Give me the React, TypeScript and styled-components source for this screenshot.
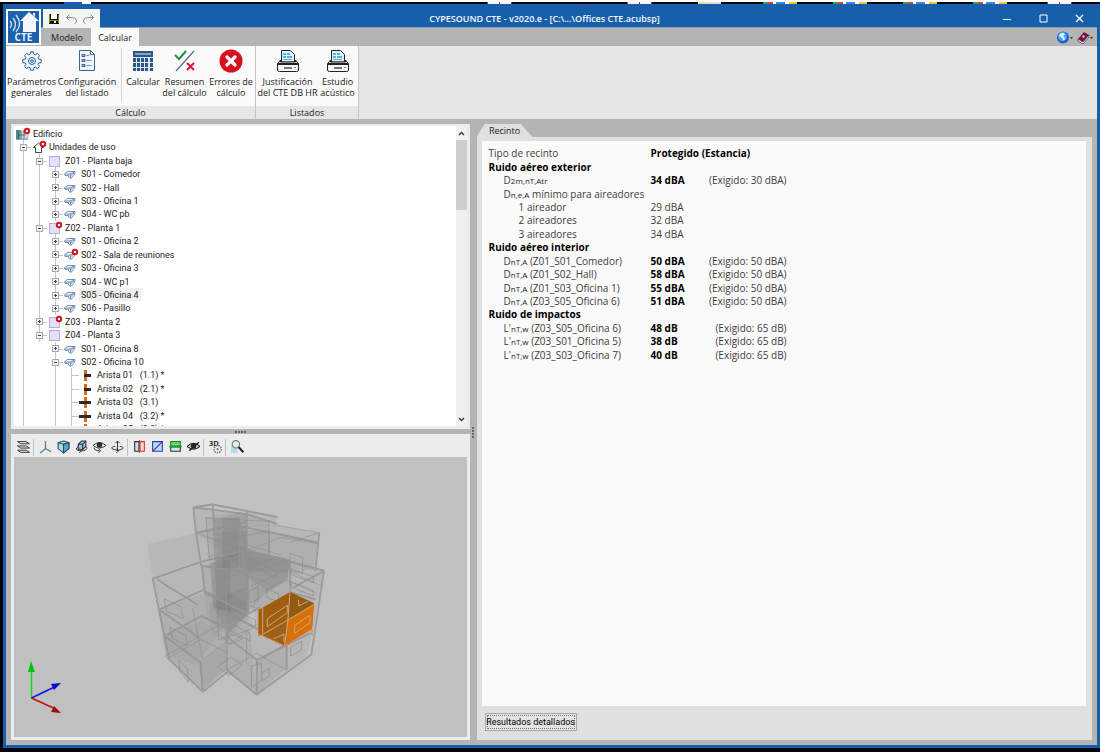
import React from "react";
import styled, { createGlobalStyle, css } from "styled-components";

const BLUE = "#185fab";
const GREY = "#b4b4b4";

const GlobalStyle = createGlobalStyle`
  *, *::before, *::after { box-sizing: border-box; }
  html, body, #root { margin: 0; height: 100%; }
  body { background: #fff; font-family: "Open Sans", "Noto Sans", sans-serif; font-size: 9px; color: #222; overflow: hidden; }
  button { font: inherit; color: inherit; border: 0; padding: 0; background: none; cursor: pointer; }
`;

/* ---------- window frame ---------- */

const Desktop = styled.div`
  height: 100vh;
  display: flex;
  flex-direction: column;
  background: #00040c;
  border-top: 2px solid #fff;
  padding: 0 0 4px 3px;
`;
const DesktopStrip = styled.svg`
  display: block;
  flex: none;
  height: 2px;
  width: 1100px;
  margin-left: -3px;
`;
const Window = styled.div`
  flex: 1;
  min-height: 0;
  display: flex;
  flex-direction: column;
  border: 3px solid ${BLUE};
  border-top: 0;
  background: ${GREY};
`;
const Header = styled.header`
  flex: none;
  display: grid;
  grid-template: 24px 18px / 37px 1fr;
  background: linear-gradient(${BLUE} 0 23px, #7a9cc0 23px 24px, ${GREY} 24px);
`;
const LogoButton = styled.button`
  grid-row: 1 / 3;
  width: 35px;
  height: 36px;
  margin-top: 5px;
  padding: 2px !important;
  background: #fff !important;
  svg { display: block; }
`;
const TitleBar = styled.div`
  display: grid;
  grid-template-columns: 57px 1fr 108px;
  align-items: end;
`;
const QuickAccess = styled.div`
  display: flex;
  align-items: center;
  justify-content: space-evenly;
  height: 19px;
  background: #f5f5f5;
  button { height: 14px; }
  svg { display: block; }
`;
const Title = styled.h1`
  margin: 0;
  font-size: 9px;
  line-height: 19px;
  font-weight: 600;
  text-align: center;
  color: #f4f8fc;
`;
const WindowControls = styled.div`
  display: flex;
  height: 19px;
  button { flex: 1; display: grid; place-items: center; }
`;
const TabRow = styled.nav`
  display: flex;
  align-items: stretch;
`;
const RibbonTab = styled.button<{ $active?: boolean }>`
  width: 48px;
  line-height: 17px;
  ${p => p.$active && css`background: #fafafa;`}
`;
const HelpButtons = styled.div`
  margin-left: auto;
  display: flex;
  align-items: center;
  gap: 4px;
  padding-right: 3px;
  svg { display: block; }
`;

/* ---------- ribbon ---------- */

const Ribbon = styled.div`
  flex: none;
  display: flex;
  height: 73px;
  background: #e6e6e6;
`;
const RibbonGroup = styled.section`
  display: flex;
  flex-direction: column;
  border-right: 1px solid #c4c4c4;
`;
const RibbonBody = styled.div`
  flex: 1;
  display: flex;
  padding: 0 1px;
  background: #fafafa;
`;
const RibbonCaption = styled.h2`
  margin: 0;
  font-size: 9px;
  font-weight: 400;
  line-height: 13px;
  text-align: center;
  background: #e6e6e6;
`;
const RibbonButton = styled.button<{ $w: number }>`
  width: ${p => p.$w}px;
  display: flex;
  flex-direction: column;
  align-items: center;
  padding-top: 3px !important;
  white-space: nowrap;
  line-height: 11px;
  svg { display: block; margin-bottom: 3px; }
`;
const RibbonSeparator = styled.span`
  width: 1px;
  margin: 2px 3px 4px;
  background: #d2d2d2;
`;

/* ---------- work area ---------- */

const WorkArea = styled.main`
  flex: 1;
  min-height: 0;
  display: grid;
  grid-template-columns: minmax(0, 459fr) 7px minmax(0, 616fr);
  padding: 5px 5px 5px 5px;
`;
const LeftColumn = styled.div`
  min-height: 0;
  display: grid;
  grid-template-rows: minmax(0, 305fr) 5px minmax(0, 306fr);
`;
const Splitter = styled.div<{ $vertical?: boolean }>`
  display: flex;
  flex-direction: ${p => (p.$vertical ? "column" : "row")};
  align-items: center;
  justify-content: center;
  gap: 1px;
  i { width: 2px; height: 2px; background: #666; }
`;
const TreePane = styled.section`
  display: flex;
  min-height: 0;
  border: 3px solid #ececec;
  border-width: 2px 3px 3px;
  background: #fff;
`;
const TreeViewport = styled.div`
  flex: 1;
  overflow: hidden;
`;
const TreeList = styled.ul`
  list-style: none;
  margin: 0;
  padding: 1px 0 0 1px;
  height: 296px;
  display: grid;
  grid-auto-rows: 1fr;
`;
const TreeTail = styled.ul`
  list-style: none;
  margin: 0;
  padding: 0 0 0 1px;
`;
const TreeRow = styled.li`
  display: flex;
  min-height: 0;
  white-space: pre;
  line-height: 14px;
  font-family: Roboto, "Open Sans", sans-serif;
`;
const Guide = styled.span<{ $v?: boolean; $h?: boolean }>`
  width: 16px;
  flex: none;
  display: flex;
  align-items: center;
  justify-content: center;
  background-repeat: no-repeat;
  background-image:
    ${p => (p.$v ? "linear-gradient(#c4c4c4, #c4c4c4)" : "none")},
    ${p => (p.$h ? "linear-gradient(#c4c4c4, #c4c4c4)" : "none")};
  background-size: 1px 100%, 8px 1px;
  background-position: 8px 0, 8px 7px;
`;
const Toggle = styled.button<{ $open: boolean }>`
  width: 7px;
  height: 7px;
  margin: 1px 0 0 1px;
  border: 1px solid #a8a8a8 !important;
  background:
    linear-gradient(#445, #445) center / 3px 1px no-repeat,
    ${p => (p.$open ? "" : "linear-gradient(#445, #445) center / 1px 3px no-repeat,")}
    #f4f4f8 !important;
`;
const NodeIcon = styled.span`
  width: 16px;
  flex: none;
  display: flex;
  svg { display: block; }
`;
const NodeLabel = styled.span<{ $selected?: boolean }>`
  padding: 0 2px;
  ${p => p.$selected && css`background: #efefef;`}
`;
const Scrollbar = styled.div`
  width: 11px;
  display: flex;
  flex-direction: column;
  background: #f0f0f0;
  button { height: 14px; display: grid; place-items: center; }
`;
const ScrollTrack = styled.div`
  flex: 1;
  &::before { content: ""; display: block; height: 70px; background: #cdcdcd; }
`;

const ViewPane = styled.section`
  display: flex;
  flex-direction: column;
  min-height: 0;
  border: 3px solid #ececec;
  border-top: 0;
  background: #ececec;
`;
const ViewToolbar = styled.div`
  flex: none;
  display: flex;
  align-items: center;
  height: 23px;
  padding-top: 3px;
  svg { display: block; }
`;
const ToolButton = styled.button`
  width: 18px;
  height: 16px;
  display: grid;
  place-items: center;
`;
const ToolSeparator = styled.span`
  width: 1px;
  height: 17px;
  margin: 0 2px 0 1px;
  background: #c0c0c0;
`;
const Canvas = styled.div`
  flex: 1;
  min-height: 0;
  overflow: hidden;
  background: #c0c0c0;
  svg { display: block; }
`;

/* ---------- results ---------- */

const ResultsColumn = styled.section`
  display: flex;
  flex-direction: column;
  min-height: 0;
`;
const ResultsTab = styled.button`
  align-self: flex-start;
  width: 56px;
  height: 13px;
  line-height: 12px;
  text-align: center;
  background: #e0e0e0 !important;
  clip-path: polygon(8px 0, 44px 0, 100% 100%, 0 100%);
`;
const ResultsBody = styled.div`
  flex: 1;
  display: flex;
  flex-direction: column;
  padding: 4px 6px 9px 5px;
  background: #e0e0e0;
`;
const Report = styled.div`
  flex: 1;
  padding: 6px 7px;
  background: #fafafa;
`;
const ReportTable = styled.table`
  table-layout: fixed;
  width: 298px;
  height: 215px;
  border-collapse: collapse;
  font-size: 10px;
  line-height: 13px;
  color: #3c3c3c;
  white-space: nowrap;
  th, td { padding: 0; text-align: left; font-weight: 400; }
`;
const LabelCell = styled.th<{ $indent: number }>`
  && { padding-left: ${p => p.$indent * 15}px; }
`;
const HeadingCell = styled.th`
  &&& { font-weight: 700; color: #000; }
`;
const ValueCell = styled.td<{ $strong?: boolean }>`
  && { ${p => p.$strong && css`font-weight: 700; color: #000;`} }
`;
const LimitCell = styled.td`
  && { text-align: right; }
`;
const Small = styled.span`
  font-size: 8px;
  color: #222;
`;
const DetailsButton = styled.button`
  align-self: flex-start;
  width: 92px;
  height: 18px;
  margin: 7px 0 0 3px;
  padding: 1px !important;
  border: 1px solid #a8a8a8 !important;
  background: #e4e4e4 !important;
  color: #000;
  white-space: nowrap;
  span {
    display: flex;
    justify-content: center;
    height: 14px;
    border: 1px dotted #777;
    line-height: 12px;
    font-family: Roboto, "Open Sans", sans-serif;
  }
`;

/* ---------- icons ---------- */

const LogoIcon = () => (
  <svg width="31" height="32" viewBox="0 0 31 32">
    <rect width="31" height="32" fill="#1d62ad" />
    <path d="M12 10 21 1l10 9h-3v11H15V10z" fill="#f4f8fc" />
    <path d="M25 2h2v4l-2-2z" fill="#f4f8fc" />
    <g fill="none" stroke="#cfe4f8" strokeWidth="1.300">
      <path d="M2 10q3 3 0 7M5 7q5 6 0 13M8 4q7 9 0 17" />
    </g>
    <text x="15.500" y="30" textAnchor="middle" fontSize="10" fontWeight="700" fill="#e8f1fa">CTE</text>
  </svg>
);
const SaveIcon = () => (
  <svg width="12" height="12" viewBox="0 0 12 12">
    <path d="M1 1h10v10H1z" fill="#111" />
    <rect x="3" y="1" width="6" height="5" fill="#fff" />
    <path d="M1 1h1v9H1zM10 2h1v8h-1zM2 7h8v1H2z" fill="#8a8a00" />
    <rect x="6" y="8" width="2" height="2" fill="#eee" />
  </svg>
);
const UndoIcon = ({ redo }: { redo?: boolean }) => (
  <svg width="13" height="12" viewBox="0 0 13 12" fill="none" stroke="#8a8a8a" strokeWidth="1">
    <g transform={redo ? "translate(13 0) scale(-1 1)" : undefined}>
      <path d="M4.500 1.500 1.500 4.500l3 3M1.500 4.500h6q4 0 4 3.500 0 2-2 2.500" />
    </g>
  </svg>
);
const GlobeIcon = () => (
  <svg width="16" height="13" viewBox="0 0 16 13">
    <circle cx="6" cy="6.500" r="6" fill="#1c5cd0" />
    <circle cx="5.500" cy="5.500" r="4.500" fill="#4aa4f4" />
    <path d="M3 3q3-2 5 0l-2 2 2 2-1 3-2-3-3-2z" fill="#e4f6ff" />
    <path d="M13 6h3l-1.500 2z" fill="#333" />
  </svg>
);
const BookIcon = () => (
  <svg width="17" height="13" viewBox="0 0 17 13">
    <path d="M1 8 7 1l5 3-6 7z" fill="#6c1258" />
    <path d="m1 8 5 3 6-7v2l-6 7-5-3z" fill="#f4ecf2" stroke="#400830" strokeWidth=".6" />
    <path d="m6 4 2 1-1 2-2-1z" fill="#f2d020" />
    <path d="M13 6h3l-1.500 2z" fill="#333" />
  </svg>
);
const GearIcon = () => {
  const pts: string[] = [];
  for (let i = 0; i < 8; i++) {
    [[-0.280, 7], [-0.170, 9.300], [0.170, 9.300], [0.280, 7]].forEach(([d, r]) => {
      const a = (i * Math.PI) / 4 + d;
      pts.push(`${(12 + r * Math.sin(a)).toFixed(2)},${(12 - r * Math.cos(a)).toFixed(2)}`);
    });
  }
  return (
    <svg width="24" height="24" viewBox="0 0 24 24" fill="none" stroke="#2c5a8c" strokeWidth="1">
      <polygon points={pts.join(" ")} fill="#f2f7fc" strokeLinejoin="round" />
      <circle cx="12" cy="12" r="3.500" />
      <circle cx="12" cy="12" r="1.300" />
    </svg>
  );
};
const ListingIcon = () => (
  <svg width="24" height="24" viewBox="0 0 24 24" fill="none" stroke="#3c6793" strokeWidth="1">
    <path d="M4.500 1.500h11l4 4v16h-15zM15.500 1.500v4h4" fill="#eef4fa" />
    <path d="M7 5.500h3v2H7zM7 10.500h3v2H7zM7 15.500h3v2H7z" fill="#9dbbd8" />
    <path d="M11.500 6.500h3M11.500 11.500h5M11.500 16.500h5" stroke="#6c93b8" />
  </svg>
);
const CalculatorIcon = () => (
  <svg width="24" height="24" viewBox="0 0 24 24">
    <rect x="2" y="2" width="20" height="6" fill="#2b5687" />
    <rect x="4" y="4" width="16" height="2" fill="#7fa5cc" />
    <rect x="2" y="8" width="20" height="14" fill="#dce8f3" />
    {[9, 14, 19].map(y => [2, 6, 10, 14, 19].map(x => (
      <rect key={`${x}-${y}`} x={x} y={y} width="3" height={y === 19 ? 3 : 4} fill="#2b5687" />
    )))}
  </svg>
);
const SummaryIcon = () => (
  <svg width="24" height="24" viewBox="0 0 24 24" fill="none">
    <path d="M21 2 3 22" stroke="#50708e" strokeWidth="1.200" />
    <path d="m2 6 4 4 7-8" stroke="#1c9444" strokeWidth="2" />
    <path d="m14 14 7 7m0-7-7 7" stroke="#e0182c" strokeWidth="2" />
  </svg>
);
const ErrorsIcon = () => (
  <svg width="24" height="24" viewBox="0 0 24 24">
    <circle cx="12" cy="12" r="11.500" fill="#d8101c" />
    <path d="m8 8 8 8m0-8-8 8" stroke="#fff" strokeWidth="3.200" strokeLinecap="round" />
  </svg>
);
const PrinterIcon = () => (
  <svg width="24" height="24" viewBox="0 0 24 24">
    <path d="M5.500 13V1.500h9l4 4V13z" fill="#e4f5fd" stroke="#222" />
    <path d="M7 4h3v2H7zM11 4h3v2h-3zM7 7h3v2H7zM11 7h5v2h-5zM7 10h9v1H7z" fill="#55b4e0" />
    <path d="M1.500 15l3-4v2h15v-2l3 4v6q0 1.500-2 1.500h-17q-2 0-2-1.500z" fill="#f4f4f4" stroke="#222" />
    <path d="M1.500 14h21v2h-21z" fill="#222" />
    <path d="M8 18h8v2H8z" fill="#777" />
    <rect x="18" y="18" width="2" height="1" fill="#e07020" />
  </svg>
);

const ErrorBadge = () => (
  <circle cx="12" cy="4" r="2.200" fill="#fff" stroke="#d4141c" strokeWidth="2" />
);
const NodeGlyph = ({ kind, error }: { kind: string; error?: boolean }) => (
  <svg width="16" height="14" viewBox="0 0 16 14">
    {kind === "building" && (
      <g>
        <path d="M1 3h5v9H1z" fill="#4a8f86" />
        <path d="M5 4h8v8H5z" fill="#c8dce0" stroke="#7d9aa0" strokeWidth=".6" />
        <path d="M3.500 4v8M6 4v8M9 3v9M3 8h7" stroke="#556" strokeWidth=".8" />
        <path d="M1 12.500h12" stroke="#7ab0d8" />
      </g>
    )}
    {kind === "house" && (
      <path d="M4.500 12.500v-5h-2l5-4.500 5 4.500h-2v5z" fill="#fff" stroke="#444" />
    )}
    {kind === "zone" && <rect x="2.500" y="2.500" width="10" height="10" fill="#e2e0fc" stroke="#b4b0d4" />}
    {kind === "room" && (
      <path d="M1.500 7 4 4.500h8l-.5 3-3.500 4-2.500-1.500V8.500H2zM2 7h5l4.500-2M7 7l1 4M7 9l4-3" fill="#eef4fa" stroke="#6484a8" strokeWidth=".9" />
    )}
    {(kind === "edgeT" || kind === "edgeX") && (
      <g>
        <rect x="5" y="2" width="3" height="11" fill="#dd6a10" />
        <rect x={kind === "edgeT" ? 5 : 0} y="6" width={kind === "edgeT" ? 7 : 12} height="3" fill="#2a2a2a" />
      </g>
    )}
    {error && <ErrorBadge />}
  </svg>
);

/* ---------- tree data: one guide character for each indent level ---------- */

type Node = { g: string; icon: string; label: string; error?: boolean; selected?: boolean };
const nodes: Node[] = [
  { g: "", icon: "building", label: "Edificio", error: true },
  { g: "-", icon: "house", label: "Unidades de uso", error: true },
  { g: "|-", icon: "zone", label: "Z01 - Planta baja" },
  { g: "||+", icon: "room", label: "S01 - Comedor" },
  { g: "||+", icon: "room", label: "S02 - Hall" },
  { g: "||+", icon: "room", label: "S03 - Oficina 1" },
  { g: "||+", icon: "room", label: "S04 - WC pb" },
  { g: "|-", icon: "zone", label: "Z02 - Planta 1", error: true },
  { g: "||+", icon: "room", label: "S01 - Oficina 2" },
  { g: "||+", icon: "room", label: "S02 - Sala de reuniones", error: true },
  { g: "||+", icon: "room", label: "S03 - Oficina 3" },
  { g: "||+", icon: "room", label: "S04 - WC p1" },
  { g: "||+", icon: "room", label: "S05 - Oficina 4", selected: true },
  { g: "||+", icon: "room", label: "S06 - Pasillo" },
  { g: "|+", icon: "zone", label: "Z03 - Planta 2", error: true },
  { g: "|-", icon: "zone", label: "Z04 - Planta 3" },
  { g: "| +", icon: "room", label: "S01 - Oficina 8" },
  { g: "| -", icon: "room", label: "S02 - Oficina 10" },
  { g: "| |t", icon: "edgeT", label: "Arista 01   (1.1) *" },
  { g: "| |t", icon: "edgeT", label: "Arista 02   (2.1) *" },
  { g: "| |t", icon: "edgeX", label: "Arista 03   (3.1)" },
  { g: "| |t", icon: "edgeX", label: "Arista 04   (3.2) *" },
  { g: "| |t", icon: "edgeX", label: "Arista 05   (3.3) *" },
];

/* ---------- report data ---------- */

type Line = { head?: string; sym?: string; sub?: string; text?: string; indent?: number; value?: string; strong?: boolean; limit?: string };
const lines: Line[] = [
  { text: "Tipo de recinto", value: "Protegido (Estancia)", strong: true },
  { head: "Ruido aéreo exterior" },
  { sym: "D", sub: "2m,nT,Atr", indent: 1, value: "34 dBA", strong: true, limit: "(Exigido: 30 dBA)" },
  { sym: "D", sub: "n,e,A", text: " mínimo para aireadores", indent: 1 },
  { text: "1 aireador", indent: 2, value: "29 dBA" },
  { text: "2 aireadores", indent: 2, value: "32 dBA" },
  { text: "3 aireadores", indent: 2, value: "34 dBA" },
  { head: "Ruido aéreo interior" },
  { sym: "D", sub: "nT,A", text: " (Z01_S01_Comedor)", indent: 1, value: "50 dBA", strong: true, limit: "(Exigido: 50 dBA)" },
  { sym: "D", sub: "nT,A", text: " (Z01_S02_Hall)", indent: 1, value: "58 dBA", strong: true, limit: "(Exigido: 50 dBA)" },
  { sym: "D", sub: "nT,A", text: " (Z01_S03_Oficina 1)", indent: 1, value: "55 dBA", strong: true, limit: "(Exigido: 50 dBA)" },
  { sym: "D", sub: "nT,A", text: " (Z03_S05_Oficina 6)", indent: 1, value: "51 dBA", strong: true, limit: "(Exigido: 50 dBA)" },
  { head: "Ruido de impactos" },
  { sym: "L'", sub: "nT,w", text: " (Z03_S05_Oficina 6)", indent: 1, value: "48 dB", strong: true, limit: "(Exigido: 65 dB)" },
  { sym: "L'", sub: "nT,w", text: " (Z03_S01_Oficina 5)", indent: 1, value: "38 dB", strong: true, limit: "(Exigido: 65 dB)" },
  { sym: "L'", sub: "nT,w", text: " (Z03_S03_Oficina 7)", indent: 1, value: "40 dB", strong: true, limit: "(Exigido: 65 dB)" },
];

/* ---------- toolbar glyphs ---------- */

const INK = "#333";
const toolGroups: { name: string; art: React.ReactNode }[][] = [
  [{ name: "Capas", art: <path d="M.5 1.500h8l3 2h-8zM.5 5.500h8l3 2h-8zM.5 9.500h8l3 2h-8z" fill="#d8eef4" stroke={INK} strokeWidth=".9" /> }],
  [
    { name: "Ejes", art: <path d="M6 1v7l-5 4m5-4 5 3" fill="none" stroke="#4a7898" strokeWidth="1.100" /> },
    { name: "Perspectiva", art: <g stroke="#2a4c5c"><path d="M1 2.500 6 1l5 1.500V8l-5 4-5-4z" fill="#a8dcf0" /><path d="M6 4v8l5-4V2.500z" fill="#5aa8c8" /><path d="M1 2.500 6 4l5-1.500" fill="none" /></g> },
    { name: "Orbitar", art: <g stroke={INK}><path d="M3 4l3-3h4v5L7 9H3z" fill="#90c8e0" /><path d="M3 4h4v5M7 4l3-3" fill="none" /><path d="M3 6Q-1 9 4 10h4q5-2 2-4M4 12l2-2-2-2" fill="none" strokeWidth=".9" /></g> },
    { name: "Girar", art: <g><path d="M0 5q6-5 12 0-6 5-12 0z" fill="#fff" stroke={INK} strokeWidth=".9" /><circle cx="6" cy="4.500" r="2.700" fill={INK} /><path d="M1 7q0 3 5 3M5 8l2 2-2 2" fill="none" stroke={INK} strokeWidth=".9" /></g> },
    { name: "Desplazar", art: <g fill="none" stroke={INK} strokeWidth=".9"><path d="M6 1v9M4 3l2-2 2 2" /><path d="M4 6Q0 6 1 8q5 3 10 0 1-2-3-2M5 8l2 2-2 2" /></g> },
  ],
  [
    { name: "Sección vertical", art: <g><path d="M1.500 1.500h4v9h-4z" fill="#b8e4f0" stroke={INK} /><path d="M6.500 1.500h4v9h-4z" fill="#f8d8d8" stroke="#d83030" /><path d="M6 0v12" stroke="#d83030" /></g> },
    { name: "Plano de corte", art: <g><path d="M1.500 1.500h9v9h-9z" fill="#b8dcf4" stroke="#3434a8" /><path d="M1.500 10.500l9-9" stroke="#3434a8" /></g> },
    { name: "Sección horizontal", art: <g><path d="M1.500 1.500h9v4h-9z" fill="#60e070" stroke="#208830" /><path d="M1.500 6.500h9v4h-9z" fill="#c8e8f0" stroke={INK} /><path d="M0 6h12" stroke="#18a030" strokeWidth="1.200" /></g> },
    { name: "Ocultar", art: <g><path d="M0 6q6-6 12 0-6 5-12 0z" fill="#ccc" stroke="#222" /><circle cx="6" cy="5.500" r="2.500" fill="#222" /><path d="M2 10 11 2" stroke="#222" strokeWidth="1.300" /></g> },
  ],
  [{ name: "Ajustes 3D", art: <g><text x="0" y="6" fontSize="7" fontWeight="700" fill="#333">3D</text><circle cx="8" cy="8.500" r="3.400" fill="#eee" stroke="#777" strokeWidth="1.300" strokeDasharray="1.500 .8" /><circle cx="8" cy="8.500" r="1" fill="#777" /></g> }],
  [{ name: "Ampliar", art: <g><path d="M0 5h6v7H0z" fill="#b4d8ec" /><circle cx="4.500" cy="4" r="3.400" fill="#e4eef4" stroke="#777" /><path d="m7 6.500 4.500 5" stroke="#222" strokeWidth="2" /></g> }],
];

/* ---------- 3D model ---------- */

const EDGES =
  "M190 52 248 43 442 81M190 52 350 72 440 102M190 52l8 76M248 43l4 54M198 128l150-32M350 64v180" +
  "M198 128l16 100 138 18M198 128 328 108 566 158M568 128 556 244M352 246l10-4" +
  "M68 266 212 216 350 180M68 266l48 236M82 268l30 20 90 56M84 360l136-60 132 72" +
  "M104 438l110-60 80 40M112 502 218 606M218 606l76-62M104 438l108 80 6 88M84 356l124 88" +
  "M290 300v240l90 74 164-120M354 372l36-20M354 246v128M290 368l180 98M290 440l90 70 160-80" +
  "M380 510v104M470 460v80M350 182l232 60M478 212l4 96M582 242 544 494M582 242l-90 50" +
  "M216 230l8 80M224 310l130 62M556 328l-76-22";
const FINE_EDGES =
  "M226 84l190 10 4 108M228 84l10 128M416 90l24 12M262 150l150-24M270 160l90 20M346 182l110-40 110 20" +
  "M440 106l128 22-90 30M250 90l6 180M326 80l8 160M418 120l-4 90M198 128l160 60M236 200l120-34 100 30" +
  "M250 220l100 30 130-40M250 280l80-30 90 30M262 330l90-34M262 360l4 90 90-30M300 320l90 40" +
  "M294 464l186-130M104 500l190-112M214 512l80-60M380 520l88-60M350 430v90M188 356l30 150" +
  "M116 504l96-56 80 40M290 540l90-50 90 50M410 300l60-30 90 40M360 290l110-50 110 50";
const OPENINGS =
  "M102 326l50 24 8 36-50-22zM120 412l46 24 6 32-46-24zM146 510l26 26 4 40-26-30zM252 264l20-4v38l-20 4z" +
  "M360 300l24-10v38l-24 10zM410 296l36 16v24l-36-14zM360 210l80 32v20l-80-34zM302 356l74 34v20l-74-34z" +
  "M300 400l60 30v22l-60-30zM480 190l38 12v50l-38-12zM262 530l40-28 34 22-38 32zM278 444l24-12 36 14-36 16z" +
  "M482 472l32-18v26l-32 18zM396 548l22-14v24l-22 14zM364 528l30-8v52l-30 20zM484 236l66 24v18l-66-24z" +
  "M484 276l66 26v16l-66-26z";

const BuildingModel = () => (
  <svg width="453" height="280" viewBox="0 0 453 280" role="img" aria-label="Modelo 3D del edificio">
    <g transform="translate(116 33) scale(.33333)" strokeLinejoin="round">
      <g fill="#707070" fillOpacity=".1">
        <path d="M52 162 204 128l4 92-140 48z" />
        <path d="M190 52 248 43l192 36v28l-90 4-4-48-96-16z" />
        <path d="M192 54 350 70l4 175-138-15z" />
        <path d="M226 80l100-14 92 24 2 108-64 4-6 170-100-20z" />
        <path d="M250 90l76-10 24 60 6 220-94 20z" />
        <path d="M330 106 440 105l128 25-20 112-110-38-86 42z" />
        <path d="M198 128 416 120l150 36-8 74-60 20-150-8z" />
        <path d="M68 266 212 222l140 22v138l-62 20-92 124-86-30z" />
        <path d="M84 360 220 310l132 62 32 60 80 36 82-40-16 70-148 112-92-70-76 62-108-100z" />
        <path d="M350 175l232 66-36 190-84 38-80-36z" />
        <path d="M216 230l130-50 8 190-64 66-60-50z" />
        <path d="M290 300l60 40 30 274-90-74z" />
        <path d="M96 440l120-50 70 50v100l-70 62-104-104z" />
        <path d="M206 520l84-60v78l-72 65z" />
        <path d="M380 520l90-60v70l-90 84z" />
        <path d="M350 180l130 28v100l-100 60-30-20z" />
        <path d="M240 340l110-50v90l-60 80-50-40z" />
      </g>
      <g fill="#4c4c4c" fillOpacity=".11">
        <path d="M248 90l80-24 22 10v110l-92 30z" />
        <path d="M350 180l130 28-8 56-60 40-62-44z" />
        <path d="M256 200l94-10 6 180-60 60-38-60z" />
        <path d="M276 84h50v150h-50z" />
        <path d="M354 200l120 10v60l-70 42-48 58z" />
        <path d="M240 220l60-14v160l-50-10z" />
      </g>
      <g fill="none">
        <path d={FINE_EDGES} stroke="#8a8a8a" strokeOpacity=".55" strokeWidth="3" />
        <path d={EDGES} stroke="#868686" strokeOpacity=".75" strokeWidth="5" />
        <path d={EDGES} stroke="#a6a6a6" strokeOpacity=".8" strokeWidth="2" />
        <path d={OPENINGS} stroke="#8c8c8c" strokeOpacity=".7" strokeWidth="3" />
      </g>
      <path d="M386 360 480 306l72 34-6 76-82 50-80-36z" fill="#bd6810" />
      <path d="M480 306l72 34-78 48z" fill="#945913" />
      <path d="M474 388l78-44-6 72-82 50z" fill="#d8700a" />
      <path d="M386 360l92-52-8 90-84 40z" fill="#a05e10" />
      <path d="M386 432l86-40-8 74z" fill="#a06018" />
      <g fill="none" stroke="#c9a880" strokeWidth="3">
        <path d="M398 352v78M480 306l-6 84-10 76M474 390l78-46M386 440l88-50M412 386l60-40v22l-60 42zM494 406l46-30v22l-46 32zM506 330v18l28-14M432 446l30-14v24" />
      </g>
      <path d="M386 362v68l78 38 82-52v20" fill="none" stroke="#ef6a18" strokeWidth="3" strokeDasharray="7 4" />
    </g>
    <g strokeWidth="1.500">
      <path d="M17.500 241V213" stroke="#10d818" />
      <path d="M17 204l4 11h-7z" fill="#08c010" />
      <path d="m17.500 241 23-11" stroke="#1010e8" />
      <path d="m47 226-7 7-3-6z" fill="#0808d0" />
      <path d="m17.500 241 22 10" stroke="#c01010" />
      <path d="m47 256-10-1 3-6z" fill="#a80808" />
    </g>
  </svg>
);

const Chevron = ({ down }: { down?: boolean }) => (
  <svg width="7" height="5" viewBox="0 0 7 5" fill="none" stroke="#333" strokeWidth="1.300">
    <path d={down ? "m1 1 2.500 2.500L6 1" : "m1 4 2.500-2.500L6 4"} />
  </svg>
);

export default function App() {
  return (
    <>
      <GlobalStyle />
      <Desktop>
        <DesktopStrip viewBox="0 0 1100 2" aria-hidden>
          <path d="M64 0h18v2H64z" fill="#2058b8" />
          <path d="M82 0h9v2h-9z" fill="#fff" />
          {[487, 627, 1047].map(x => (
            <g key={x}>
              <rect x={x} width="25" height="2" fill="#f4f4f4" />
              <path d={`M${x} 0h1v2h-1zM${x + 12} 0h1v2h-1zM${x + 24} 0h1v2h-1z`} fill="#d82020" />
            </g>
          ))}
          <rect x="698" width="8" height="2" fill="#f0dc80" />
          <rect x="706" width="15" height="2" fill="#e8d8d8" />
          {[763, 833, 903, 973].map(x => (
            <g key={x}>
              <rect x={x} width="5" height="2" fill="#30a050" />
              <rect x={x + 5} width="5" height="2" fill="#e04030" />
              <rect x={x + 10} width="16" height="2" fill="#fff" />
              <rect x={x + 13} width="9" height="2" fill="#4080e8" />
              <rect x={x + 26} width="8" height="2" fill="#f4c430" />
            </g>
          ))}
        </DesktopStrip>
        <Window>
          <Header>
            <LogoButton aria-label="Menú"><LogoIcon /></LogoButton>
            <TitleBar>
              <QuickAccess>
                <button aria-label="Guardar"><SaveIcon /></button>
                <button aria-label="Deshacer"><UndoIcon /></button>
                <button aria-label="Rehacer"><UndoIcon redo /></button>
              </QuickAccess>
              <Title>CYPESOUND CTE - v2020.e - [C:\...\Offices CTE.acubsp]</Title>
              <WindowControls>
                <button aria-label="Minimizar"><svg width="9" height="9"><path d="M0 5.500h8" stroke="#fff" /></svg></button>
                <button aria-label="Maximizar"><svg width="9" height="9"><path d="M1 1h7v7H1z" fill="none" stroke="#fff" /></svg></button>
                <button aria-label="Cerrar"><svg width="9" height="9"><path d="m1 1 7 7m0-7L1 8" stroke="#fff" strokeWidth="1.400" /></svg></button>
              </WindowControls>
            </TitleBar>
            <TabRow>
              <RibbonTab>Modelo</RibbonTab>
              <RibbonTab $active>Calcular</RibbonTab>
              <HelpButtons>
                <button aria-label="Web"><GlobeIcon /></button>
                <button aria-label="Ayuda"><BookIcon /></button>
              </HelpButtons>
            </TabRow>
          </Header>

          <Ribbon>
            <RibbonGroup>
              <RibbonBody>
                <RibbonButton $w={49}><GearIcon />Parámetros<br />generales</RibbonButton>
                <RibbonButton $w={62}><ListingIcon />Configuración<br />del listado</RibbonButton>
                <RibbonSeparator />
                <RibbonButton $w={36}><CalculatorIcon />Calcular</RibbonButton>
                <RibbonButton $w={47}><SummaryIcon />Resumen<br />del cálculo</RibbonButton>
                <RibbonButton $w={46}><ErrorsIcon />Errores de<br />cálculo</RibbonButton>
              </RibbonBody>
              <RibbonCaption>Cálculo</RibbonCaption>
            </RibbonGroup>
            <RibbonGroup>
              <RibbonBody>
                <RibbonButton $w={61}><PrinterIcon />Justificación<br />del CTE DB HR</RibbonButton>
                <RibbonButton $w={39}><PrinterIcon />Estudio<br />acústico</RibbonButton>
              </RibbonBody>
              <RibbonCaption>Listados</RibbonCaption>
            </RibbonGroup>
          </Ribbon>

          <WorkArea>
            <LeftColumn>
              <TreePane>
                <TreeViewport>
                  <TreeList>
                    {nodes.slice(0, 22).map((n, i) => <TreeItem key={i} node={n} />)}
                  </TreeList>
                  <TreeTail><TreeItem node={nodes[22]} /></TreeTail>
                </TreeViewport>
                <Scrollbar>
                  <button aria-label="Subir"><Chevron /></button>
                  <ScrollTrack />
                  <button aria-label="Bajar"><Chevron down /></button>
                </Scrollbar>
              </TreePane>
              <Splitter><i /><i /><i /><i /></Splitter>
              <ViewPane>
                <ViewToolbar>
                  {toolGroups.map((group, gi) => (
                    <React.Fragment key={gi}>
                      {gi > 0 && <ToolSeparator />}
                      {group.map(t => (
                        <ToolButton key={t.name} aria-label={t.name}>
                          <svg width="13" height="14" viewBox="0 0 12 13">{t.art}</svg>
                        </ToolButton>
                      ))}
                    </React.Fragment>
                  ))}
                </ViewToolbar>
                <Canvas><BuildingModel /></Canvas>
              </ViewPane>
            </LeftColumn>
            <Splitter $vertical><i /><i /><i /><i /></Splitter>
            <ResultsColumn>
              <ResultsTab>Recinto</ResultsTab>
              <ResultsBody>
                <Report>
                  <ReportTable>
                    <colgroup><col width="162" /><col width="50" /><col width="86" /></colgroup>
                    <tbody>
                      {lines.map((l, i) => (
                        <tr key={i}>
                          {l.head ? (
                            <HeadingCell colSpan={3} scope="rowgroup">{l.head}</HeadingCell>
                          ) : (
                            <>
                              <LabelCell $indent={l.indent ?? 0} scope="row">
                                {l.sym}{l.sub && <Small>{l.sub}</Small>}{l.text}
                              </LabelCell>
                              <ValueCell $strong={l.strong}>{l.value}</ValueCell>
                              <LimitCell>{l.limit}</LimitCell>
                            </>
                          )}
                        </tr>
                      ))}
                    </tbody>
                  </ReportTable>
                </Report>
                <DetailsButton><span>Resultados detallados</span></DetailsButton>
              </ResultsBody>
            </ResultsColumn>
          </WorkArea>
        </Window>
      </Desktop>
    </>
  );
}

function TreeItem({ node }: { node: Node }) {
  return (
    <TreeRow>
      {node.g.split("").filter(Boolean).map((c, i) => (
        <Guide key={i} $v={c !== " "} $h={c === "+" || c === "-" || c === "t"}>
          {(c === "+" || c === "-") && <Toggle $open={c === "-"} aria-label={c === "-" ? "Contraer" : "Expandir"} />}
        </Guide>
      ))}
      <NodeIcon><NodeGlyph kind={node.icon} error={node.error} /></NodeIcon>
      <NodeLabel $selected={node.selected}>{node.label}</NodeLabel>
    </TreeRow>
  );
}
